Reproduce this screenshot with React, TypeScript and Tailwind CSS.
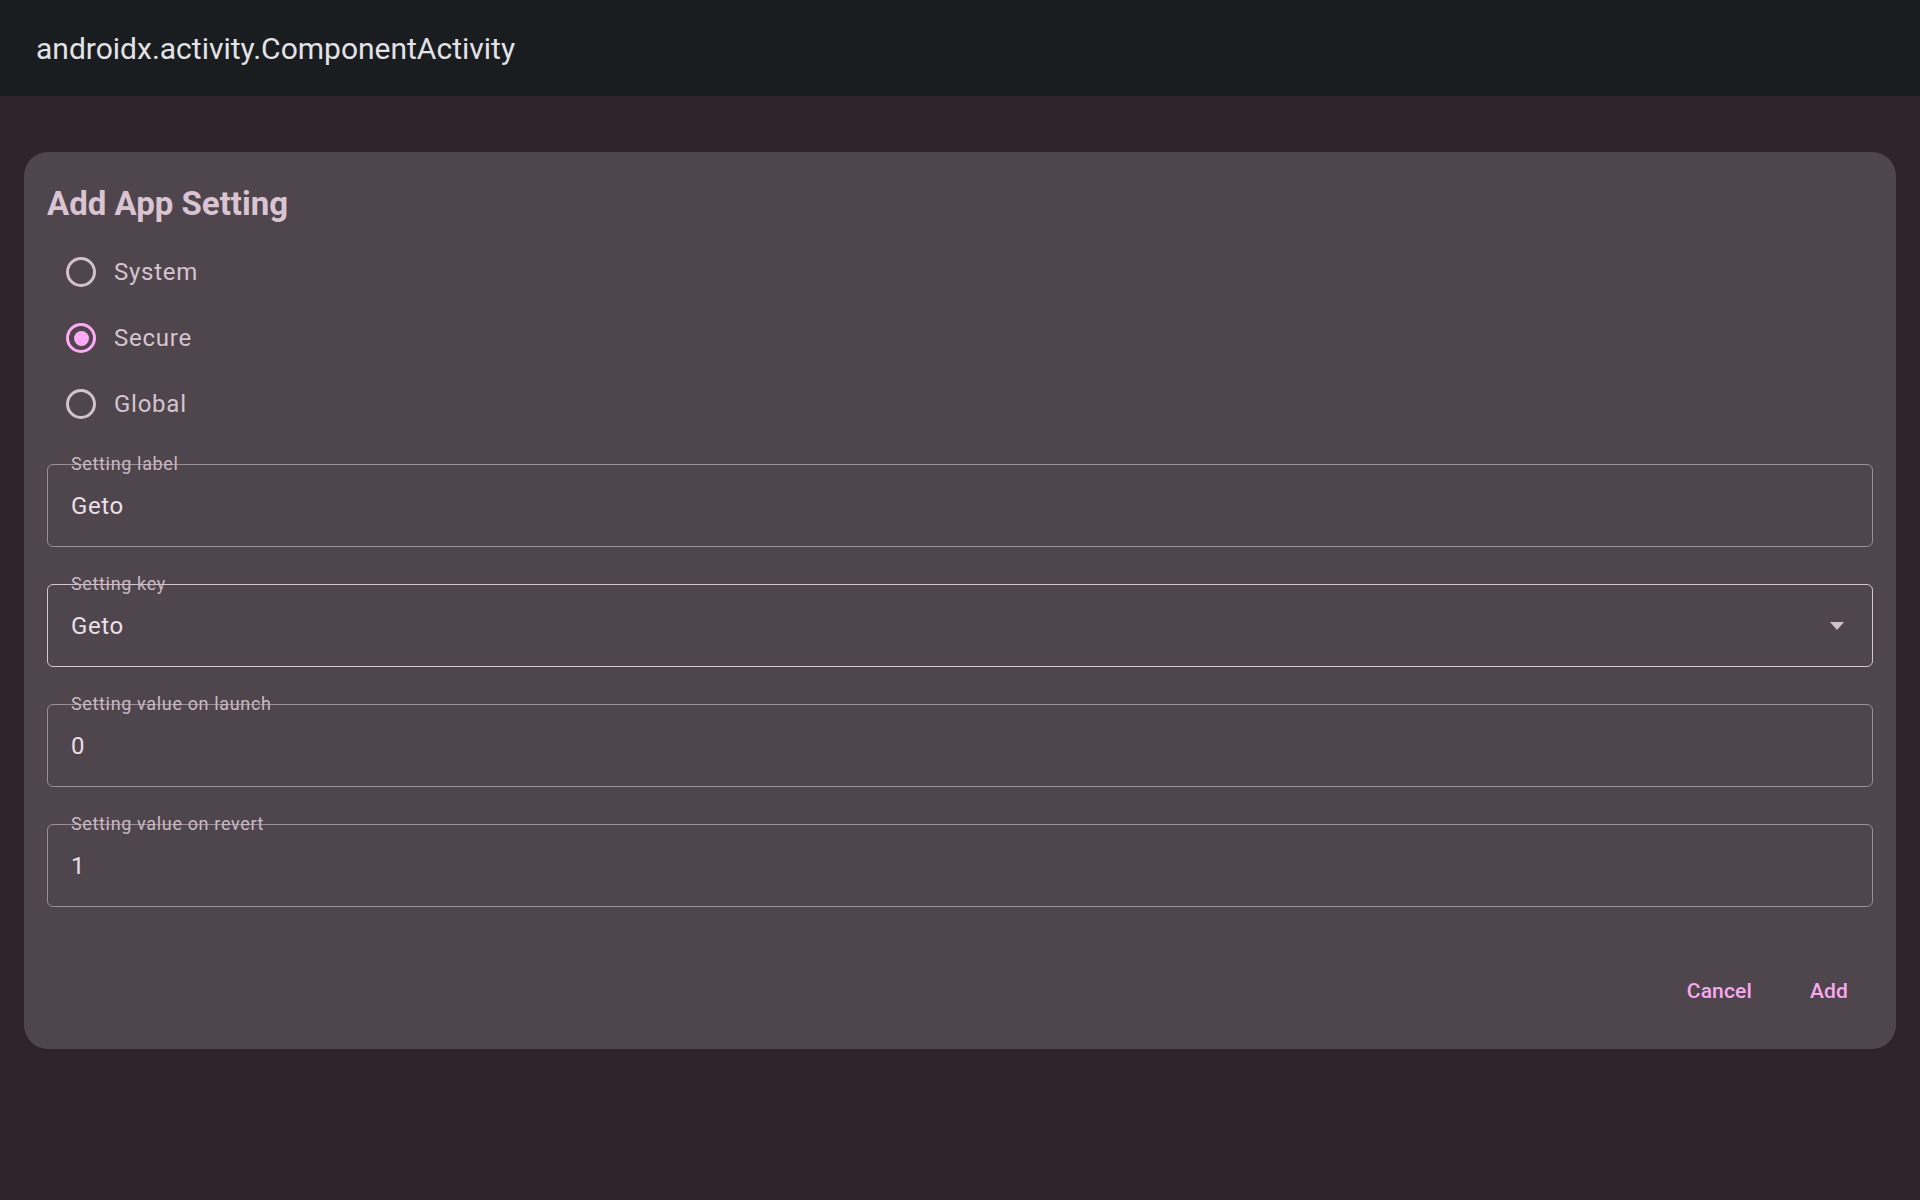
import React from "react";

const options = ["System", "Secure", "Global"];

const fields = [
  { label: "Setting label", value: "Geto", dropdown: false, active: false },
  { label: "Setting key", value: "Geto", dropdown: true, active: true },
  { label: "Setting value on launch", value: "0", dropdown: false, active: false },
  { label: "Setting value on revert", value: "1", dropdown: false, active: false },
];

function Radio({ checked }: { checked: boolean }) {
  return (
    <div
      className={
        checked
          ? "w-[30px] h-[30px] rounded-full border-[3px] border-[#ffa9f7] flex items-center justify-center shrink-0"
          : "w-[30px] h-[30px] rounded-full border-[3px] border-[#d2c2cb] shrink-0"
      }
    >
      {checked && <div className="w-[15px] h-[15px] rounded-full bg-[#ffa9f7]" />}
    </div>
  );
}

function Field({ label, value, dropdown, active }: (typeof fields)[number]) {
  return (
    <div
      className={
        active
          ? "relative h-[83px] rounded-[6px] border-[1.5px] border-[#d6c6cf] flex items-center pl-[23px] pr-[28px]"
          : "relative h-[83px] rounded-[6px] border-[1.5px] border-[#9a8e97] flex items-center pl-[23px] pr-[28px]"
      }
    >
      <span className="absolute left-[23px] top-[-13px] text-[18px] leading-[24px] tracking-[0.65px] text-[#c9bac3]">
        {label}
      </span>
      <span className="flex-1 text-[24px] tracking-[0.6px] text-[#ebdfe7]">{value}</span>
      {dropdown && (
        <svg width="14" height="8" viewBox="0 0 14 8" className="shrink-0">
          <path d="M0 0 L14 0 L7 8 Z" fill="#d2c2cc" />
        </svg>
      )}
    </div>
  );
}

export default function App() {
  const selected = "Secure";
  return (
    <div className="min-h-[1200px] bg-[#2e232a] font-['Roboto',sans-serif]">
      <header className="h-[96px] bg-[#1a1d20] flex items-center pl-[36px]">
        <h1 className="text-[30px] leading-[36px] mt-[2px] text-[#e3e2e6]">androidx.activity.ComponentActivity</h1>
      </header>

      <main className="pt-[56px] px-[24px]">
        <section className="bg-[#4f454c] rounded-[24px] px-[23px] pt-[32px] pb-[27px]">
          <h2 className="text-[33px] leading-[40px] font-bold text-[#dac4d2]">Add App Setting</h2>

          <div className="mt-[15px] pl-[19px]">
            {options.map((o) => (
              <div key={o} className="h-[66px] flex items-center gap-[18px]">
                <Radio checked={o === selected} />
                <span className="text-[24px] tracking-[0.75px] text-[#d6c4cf]">{o}</span>
              </div>
            ))}
          </div>

          <div className="mt-[27px] flex flex-col gap-[37px]">
            {fields.map((f) => (
              <Field key={f.label} {...f} />
            ))}
          </div>

          <div className="mt-[55px] h-[60px] flex items-center justify-end gap-[58px] pr-[25px]">
            <button className="text-[21px] font-medium tracking-[0.15px] text-[#f8a9ef]">Cancel</button>
            <button className="text-[21px] font-medium tracking-[0.15px] text-[#f8a9ef]">Add</button>
          </div>
        </section>
      </main>
    </div>
  );
}
